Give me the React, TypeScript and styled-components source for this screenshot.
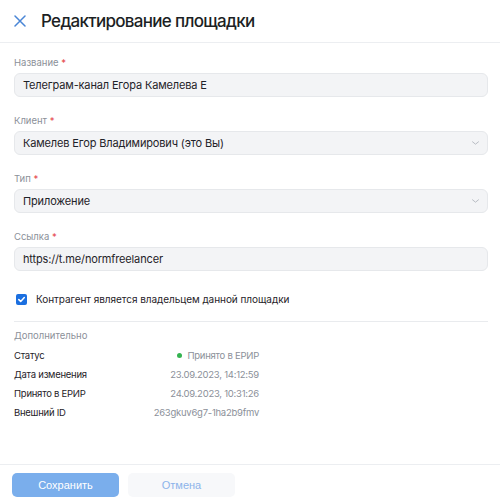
import React from "react";
import styled, { createGlobalStyle } from "styled-components";

const Global = createGlobalStyle`
  html, body { margin: 0; padding: 0; background: #fff; }
  body { font-family: Inter, "Noto Sans", sans-serif; color: #1f2329; }
  * { box-sizing: border-box; }
`;

const Page = styled.div`
  width: 500px;
  height: 503px;
  display: flex;
  flex-direction: column;
  background: #fff;
`;

const Header = styled.header`
  height: 43px;
  display: flex;
  align-items: center;
  gap: 14px;
  padding: 0 13px;
  border-bottom: 1px solid #eceef1;
`;

const CloseButton = styled.button`
  width: 14px;
  height: 14px;
  padding: 0;
  border: 0;
  background: none;
  display: flex;
  align-items: center;
  justify-content: center;
  cursor: pointer;
`;

const Title = styled.h1`
  margin: 0;
  font-size: 17px;
  font-weight: 500;
  color: #1c1f24;
  letter-spacing: -0.7px;
`;

const Body = styled.main`
  flex: 1;
  padding: 13px 12px 0 14px;
  display: flex;
  flex-direction: column;
`;

const Field = styled.div`
  display: flex;
  flex-direction: column;
  gap: 3px;
  margin-bottom: 17px;
`;

const Label = styled.label`
  font-size: 9.5px;
  line-height: 14px;
  color: #8b9099;
`;

const Star = styled.span`
  color: #e5484d;
`;

const InputBox = styled.div`
  height: 24px;
  border: 1px solid #e6e8eb;
  background: #f3f4f6;
  border-radius: 6px;
  display: flex;
  align-items: center;
  justify-content: space-between;
  padding: 0 7px 0 8px;
  font-size: 11px;
  letter-spacing: -0.15px;
  color: #1f2329;
`;

const CheckRow = styled.div`
  display: flex;
  align-items: center;
  gap: 9px;
  padding-left: 2px;
  margin-top: 2px;
  height: 18px;
  font-size: 10px;
  letter-spacing: -0.05px;
  color: #1f2329;
`;

const CheckBox = styled.span`
  width: 11px;
  height: 11px;
  border-radius: 2px;
  background: #1b6fe0;
  display: flex;
  align-items: center;
  justify-content: center;
`;

const Divider = styled.hr`
  margin: 13px 0 0 0;
  border: 0;
  border-top: 1px solid #e9ebee;
`;

const SectionTitle = styled.div`
  margin-top: 7px;
  font-size: 9.5px;
  line-height: 14px;
  color: #8b9099;
`;

const InfoGrid = styled.div`
  margin-top: 3px;
  width: 245px;
  display: grid;
  grid-template-columns: 1fr auto;
  grid-auto-rows: 19px;
  align-items: center;
`;

const InfoLabel = styled.div`
  font-size: 9.5px;
  letter-spacing: -0.25px;
  color: #1f2329;
`;

const InfoValue = styled.div`
  font-size: 9.5px;
  letter-spacing: -0.25px;
  color: #8b9099;
  text-align: right;
  display: flex;
  align-items: center;
  justify-content: flex-end;
  gap: 5px;
`;

const Dot = styled.span`
  width: 5px;
  height: 5px;
  border-radius: 50%;
  background: #34b350;
`;

const Footer = styled.footer`
  height: 39px;
  border-top: 1px solid #eceef1;
  display: flex;
  gap: 9px;
  padding: 8px 12px 0;
`;

const Button = styled.button<{ $primary?: boolean }>`
  width: 107px;
  height: 24px;
  border: 0;
  border-radius: 5px;
  font-family: "Liberation Sans", Arial, sans-serif;
  font-size: 11px;
  background: ${(p) => (p.$primary ? "#7aaeec" : "#f7f8fa")};
  color: ${(p) => (p.$primary ? "#ffffff" : "#8db4ea")};
`;

const Chevron = () => (
  <svg width="9" height="6" viewBox="0 0 9 6">
    <path d="M1.5 1.8 L4.5 4.2 L7.5 1.8" fill="none" stroke="#b9bdc4" strokeWidth="1" strokeLinecap="round" />
  </svg>
);

export default function App() {
  return (
    <Page>
      <Global />
      <Header>
        <CloseButton aria-label="close">
          <svg width="12" height="12" viewBox="0 0 12 12">
            <path d="M1 1 L11 11 M11 1 L1 11" stroke="#4a86d6" strokeWidth="1.5" strokeLinecap="round" />
          </svg>
        </CloseButton>
        <Title>Редактирование площадки</Title>
      </Header>
      <Body>
        <Field>
          <Label>Название <Star>*</Star></Label>
          <InputBox>Телеграм-канал Егора Камелева Е</InputBox>
        </Field>
        <Field>
          <Label>Клиент <Star>*</Star></Label>
          <InputBox>Камелев Егор Владимирович (это Вы)<Chevron /></InputBox>
        </Field>
        <Field>
          <Label>Тип <Star>*</Star></Label>
          <InputBox>Приложение<Chevron /></InputBox>
        </Field>
        <Field>
          <Label>Ссылка <Star>*</Star></Label>
          <InputBox>https://t.me/normfreelancer</InputBox>
        </Field>
        <CheckRow>
          <CheckBox>
            <svg width="9" height="9" viewBox="0 0 9 9">
              <path d="M1.8 4.6 L3.7 6.4 L7.3 2.6" fill="none" stroke="#fff" strokeWidth="1.5" strokeLinecap="round" strokeLinejoin="round" />
            </svg>
          </CheckBox>
          Контрагент является владельцем данной площадки
        </CheckRow>
        <Divider />
        <SectionTitle>Дополнительно</SectionTitle>
        <InfoGrid>
          <InfoLabel>Статус</InfoLabel>
          <InfoValue><Dot />Принято в ЕРИР</InfoValue>
          <InfoLabel>Дата изменения</InfoLabel>
          <InfoValue>23.09.2023, 14:12:59</InfoValue>
          <InfoLabel>Принято в ЕРИР</InfoLabel>
          <InfoValue>24.09.2023, 10:31:26</InfoValue>
          <InfoLabel>Внешний ID</InfoLabel>
          <InfoValue>263gkuv6g7-1ha2b9fmv</InfoValue>
        </InfoGrid>
      </Body>
      <Footer>
        <Button $primary>Сохранить</Button>
        <Button>Отмена</Button>
      </Footer>
    </Page>
  );
}
